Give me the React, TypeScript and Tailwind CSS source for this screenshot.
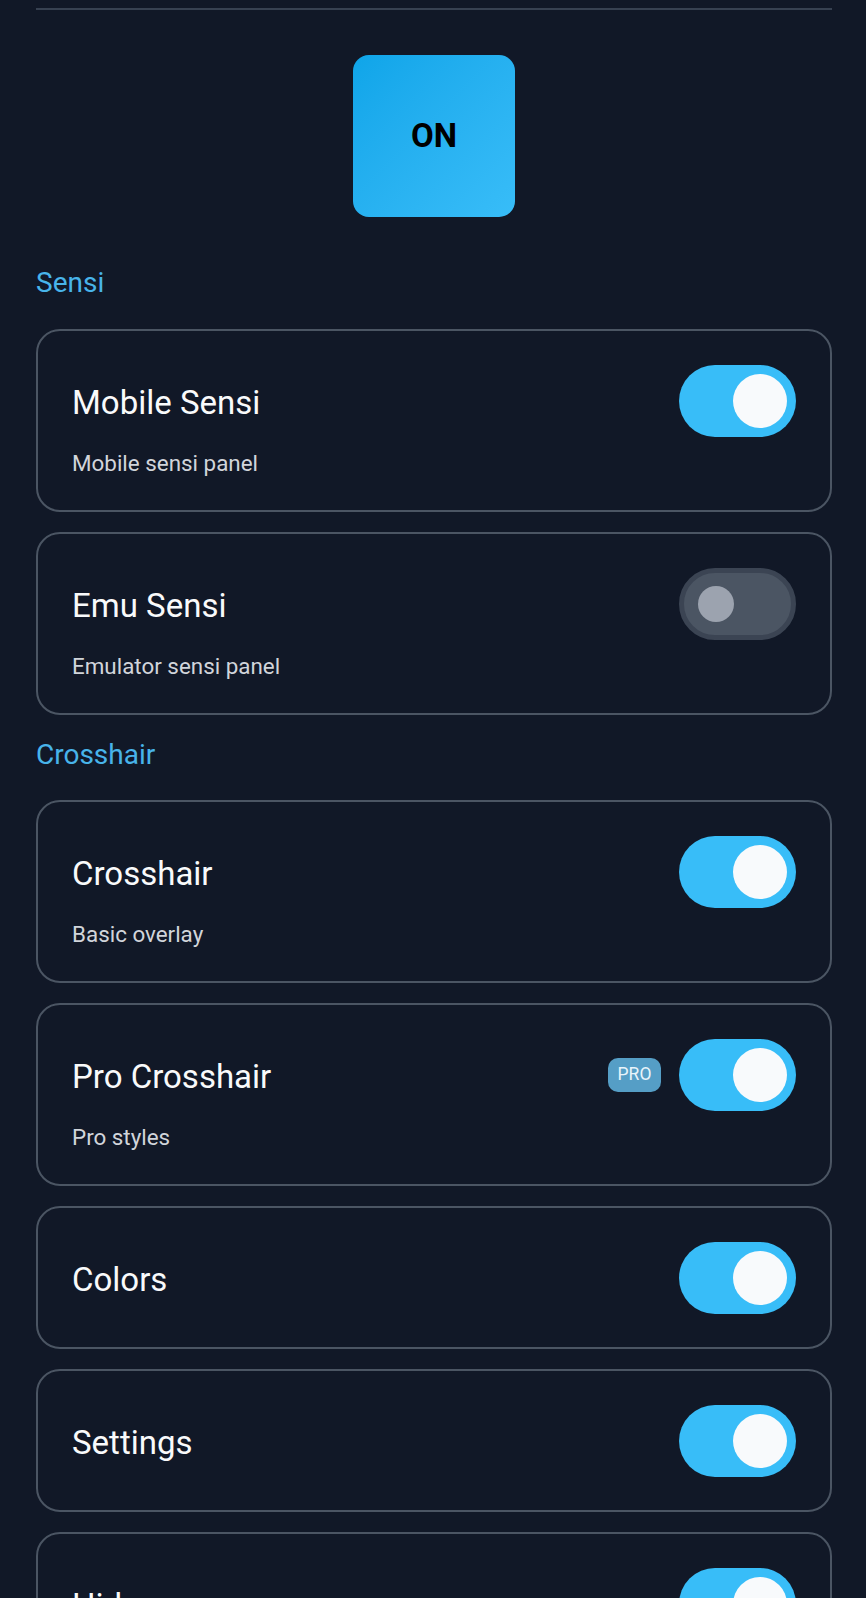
import React from "react";

function Toggle({ on }: { on: boolean }) {
  if (on) {
    return (
      <div className="w-[117px] h-[72px] rounded-full bg-[#38bdf8] flex items-center justify-end pr-[9px] shrink-0">
        <div className="w-[54px] h-[54px] rounded-full bg-[#f8fafc]" />
      </div>
    );
  }
  return (
    <div className="w-[117px] h-[72px] rounded-full bg-[#4b5563] border-[5px] border-[#3b4453] flex items-center pl-[14px] shrink-0">
      <div className="w-[36px] h-[36px] rounded-full bg-[#9ca3af]" />
    </div>
  );
}

function Card({
  title,
  subtitle,
  on,
  pro,
}: {
  title: string;
  subtitle?: string;
  on: boolean;
  pro?: boolean;
}) {
  return (
    <div className="border-2 border-[#4b5563] rounded-[24px] pl-[34px] pr-[34px] py-[33.5px]">
      <div className="flex items-center h-[72px]">
        <div className="flex-1 pt-[5px] text-[33px] leading-[40px] text-[#f9fafb]">{title}</div>
        {pro && (
          <div className="mr-[18px] w-[53px] h-[34px] rounded-[10px] bg-[#559ec6] text-[#e8f4fb] text-[17.5px] flex items-center justify-center">
            PRO
          </div>
        )}
        <Toggle on={on} />
      </div>
      {subtitle && (
        <div className="mt-[12px] text-[22.4px] leading-[28px] text-[#d1d5db]">{subtitle}</div>
      )}
    </div>
  );
}

export default function App() {
  return (
    <div
      className="min-h-screen bg-[#111827] pl-[36px] pr-[34px] pb-[40px]"
      style={{ fontFamily: "Roboto, 'Noto Sans', sans-serif" }}
    >
      <div className="pt-[8px]">
        <div className="h-[2px] bg-[#374151]" />
      </div>
      <div className="flex justify-center mt-[45px]">
        <div className="w-[162px] h-[162px] rounded-[16px] bg-linear-to-br from-[#0ea5e9] to-[#38bdf8] flex items-center justify-center">
          <span className="text-[33px] font-bold text-black">ON</span>
        </div>
      </div>
      <div className="mt-[48px] mb-[28px] text-[28px] leading-[36px] text-[#48b4ea]">Sensi</div>
      <div className="flex flex-col gap-[20px]">
        <Card title="Mobile Sensi" subtitle="Mobile sensi panel" on />
        <Card title="Emu Sensi" subtitle="Emulator sensi panel" on={false} />
      </div>
      <div className="mt-[22px] mb-[27px] text-[28px] leading-[36px] text-[#48b4ea]">Crosshair</div>
      <div className="flex flex-col gap-[20px]">
        <Card title="Crosshair" subtitle="Basic overlay" on />
        <Card title="Pro Crosshair" subtitle="Pro styles" on pro />
        <Card title="Colors" on />
        <Card title="Settings" on />
        <Card title="Hide" on />
      </div>
    </div>
  );
}
